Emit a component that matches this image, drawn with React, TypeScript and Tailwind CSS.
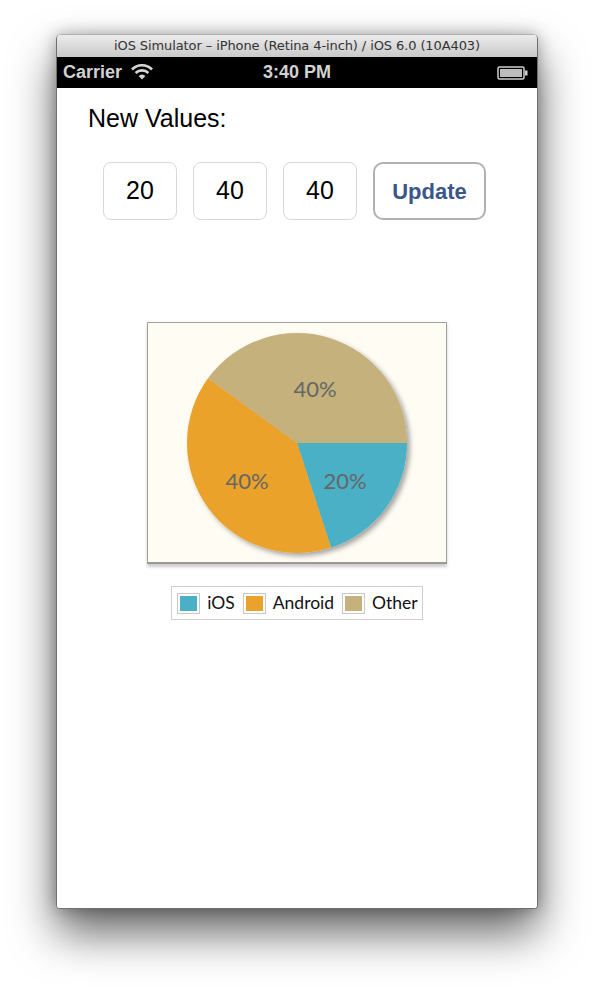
import React from "react";

const CX = 150;
const CY = 121;
const R = 110;

function pt(deg: number) {
  const a = (deg * Math.PI) / 180;
  return [CX + R * Math.cos(a), CY + R * Math.sin(a)];
}

function slice(a0: number, a1: number) {
  const [x0, y0] = pt(a0);
  const [x1, y1] = pt(a1);
  const large = a1 - a0 > 180 ? 1 : 0;
  return `M${CX} ${CY} L${x0} ${y0} A${R} ${R} 0 ${large} 1 ${x1} ${y1} Z`;
}

function Wifi() {
  return (
    <svg width="22" height="16" viewBox="0 0 22 16">
      <path d="M1 5.5 A14 14 0 0 1 21 5.5" stroke="#d4d4d4" strokeWidth="2.6" fill="none" />
      <path d="M4.6 9 A9 9 0 0 1 17.4 9" stroke="#d4d4d4" strokeWidth="2.6" fill="none" />
      <path d="M11 15.5 L7.6 12 A5 5 0 0 1 14.4 12 Z" fill="#d4d4d4" />
    </svg>
  );
}

function Battery() {
  return (
    <svg width="32" height="16" viewBox="0 0 32 16">
      <rect x="1" y="2" width="26" height="12" rx="1.5" fill="none" stroke="#cfcfcf" strokeWidth="1.5" />
      <rect x="3" y="4" width="22" height="8" fill="#bdbdbd" />
      <rect x="28" y="5.5" width="2.5" height="5" fill="#cfcfcf" />
    </svg>
  );
}

export default function App() {
  return (
    <div className="w-[594px] h-[988px] bg-white overflow-hidden relative">
      <div className="absolute left-[56px] top-[34px] w-[482px] h-[875px] rounded-t-[5px] rounded-b-[4px] shadow-[0_24px_45px_rgba(0,0,0,0.6),0_0_16px_rgba(0,0,0,0.3)] flex flex-col overflow-hidden border border-[#6f6f6f] border-t-[#b0b0b0]">
        <div className="h-[22px] bg-gradient-to-b from-[#ececec] to-[#c9c9c9] flex items-center justify-center text-[13px] text-[#333] font-['DejaVu_Sans',sans-serif] tracking-[-0.1px]">
          iOS Simulator – iPhone (Retina 4-inch) / iOS 6.0 (10A403)
        </div>
        <div className="h-[31px] bg-black flex items-center px-[6px] font-['Liberation_Sans',sans-serif] font-bold text-[#d2d2d2] text-[18px] relative">
          <span>Carrier</span>
          <span className="ml-[9px] mt-[-2px]"><Wifi /></span>
          <span className="absolute left-0 right-0 text-center pointer-events-none">3:40 PM</span>
          <span className="ml-auto mr-[2px]"><Battery /></span>
        </div>
        <div className="flex-1 bg-white flex flex-col font-['Liberation_Sans',sans-serif]">
          <div className="mt-[15px] ml-[31px] text-[25px] leading-[30px] text-black">New Values:</div>
          <div className="mt-[29px] ml-[46px] flex gap-[16px]">
            {["20", "40", "40"].map((v, i) => (
              <div key={i} className="w-[74px] h-[58px] border border-[#d8d8d8] rounded-[8px] flex items-center justify-center text-[25px] text-black">
                {v}
              </div>
            ))}
            <div className="w-[113px] h-[58px] border-2 border-[#b0b0b0] rounded-[10px] flex items-center justify-center text-[22px] font-bold text-[#3a568b]">
              Update
            </div>
          </div>
          <div className="mt-[102px] self-center w-[300px] h-[242px] border border-[#a0a0a0] border-b-2 border-b-[#999] bg-[#fffcf4] shadow-[0_3px_3px_rgba(0,0,0,0.2)]">
            <svg width="298" height="239" viewBox="1 1 298 239" className="block">
              <defs>
                <filter id="sh" x="-20%" y="-20%" width="140%" height="140%">
                  <feDropShadow dx="3" dy="3" stdDeviation="2.5" floodColor="#000" floodOpacity="0.35" />
                </filter>
              </defs>
              <g filter="url(#sh)">
                <path d={slice(0, 72)} fill="#4ab0c6" />
                <path d={slice(72, 216)} fill="#eaa22a" />
                <path d={slice(216, 360)} fill="#c4b17c" />
              </g>
              <g fontFamily="Lato, sans-serif" fontSize="22" fill="#666" textAnchor="middle">
                <text x="168" y="75">40%</text>
                <text x="100" y="167">40%</text>
                <text x="198" y="167">20%</text>
              </g>
            </svg>
          </div>
          <div className="mt-[22px] self-center h-[34px] border border-[#cfcfcf] flex items-center pl-[5px] pr-[4px] gap-[8px] font-['Lato',sans-serif] text-[17.5px] text-[#111]">
            {[
              ["iOS", "#4ab0c6"],
              ["Android", "#eaa22a"],
              ["Other", "#c4b17c"],
            ].map(([l, c]) => (
              <div key={l} className="flex items-center gap-[7px]">
                <div className="w-[23px] h-[21px] border border-[#c8c8c8] p-[2px] bg-white">
                  <div className="w-full h-full" style={{ background: c }} />
                </div>
                <span>{l}</span>
              </div>
            ))}
          </div>
        </div>
      </div>
    </div>
  );
}
